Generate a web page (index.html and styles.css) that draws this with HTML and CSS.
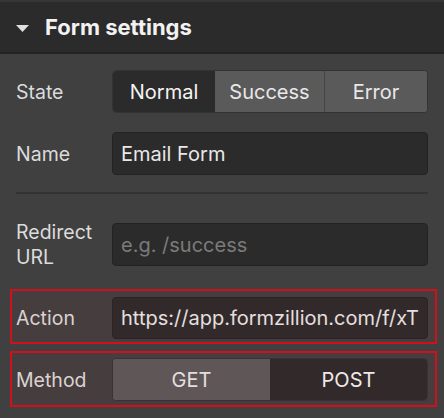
FILE: index.html
```html
<!DOCTYPE html>
<html>
<head>
<meta charset="utf-8">
<link rel="stylesheet" href="styles.css">
</head>
<body>
<div class="panel">
  <div class="header">
    <svg class="caret" width="13" height="7" viewBox="0 0 13 7"><path d="M0 0H13L6.5 7Z" fill="#e0e0e0"/></svg>
    <span class="title">Form settings</span>
  </div>
  <div class="content">
    <div class="row row-state">
      <div class="label">State</div>
      <div class="seg">
        <div class="seg-item seg-active seg-normal">Normal</div>
        <div class="seg-item seg-success">Success</div>
        <div class="seg-item seg-error">Error</div>
      </div>
    </div>
    <div class="row row-name">
      <div class="label">Name</div>
      <div class="input">Email Form</div>
    </div>
    <div class="divider"></div>
    <div class="row row-redirect">
      <div class="label label-two">Redirect<br>URL</div>
      <div class="input placeholder">e.g. /success</div>
    </div>
    <div class="row row-action highlight">
      <div class="label">Action</div>
      <div class="input clip"><span class="url">https://app.formzillion.com/f/xT</span></div>
    </div>
    <div class="row row-method highlight">
      <div class="label">Method</div>
      <div class="seg">
        <div class="seg-item seg-get">GET</div>
        <div class="seg-item seg-active seg-post">POST</div>
      </div>
    </div>
  </div>
</div>
</body>
</html>
```

FILE: styles.css
```css
* { box-sizing: border-box; }
html, body { margin: 0; padding: 0; }
body {
  background: #404040;
  font-family: Inter, "Noto Sans", sans-serif;
  color: #e2e2e2;
  width: 444px;
  height: 418px;
  overflow: hidden;
}
.panel { width: 444px; }
.header {
  height: 54px;
  background: #2b2b2b;
  border-top: 2px solid #363636;
  border-bottom: 2px solid #232323;
  display: flex;
  align-items: center;
  padding-left: 16px;
}
.caret { margin-right: 16px; margin-top: 2px; }
.title {
  font-size: 22px;
  font-weight: 700;
  color: #f2f2f2;
}
.content {
  padding: 16px 16px 0 16px;
  display: flex;
  flex-direction: column;
}
.row {
  display: flex;
  align-items: center;
  height: 43px;
  flex: none;
}
.row-name { margin-top: 19px; }
.row-redirect { margin-top: 29px; }
.row-action { margin-top: 31px; height: 42px; }
.row-method { margin-top: 19px; }
.label {
  width: 96px;
  flex: none;
  font-size: 19.5px;
  color: #dcdcdc;
}
.label-two { line-height: 25px; }
.seg {
  flex: 1;
  display: flex;
  height: 43px;
  border: 1px solid #333;
  border-radius: 4px;
  overflow: hidden;
  background: #5a5a5a;
}
.seg-item {
  display: flex;
  align-items: center;
  justify-content: center;
  font-size: 20px;
  color: #e8e8e8;
  background: #5a5a5a;
}
.seg-active { background: #2b2b2b; color: #f4f4f4; }
.seg-normal { width: 102px; }
.seg-success { width: 110px; border-right: 1px solid #444; }
.seg-error { flex: 1; }
.seg-get { width: 157px; }
.seg-post { flex: 1; }
.input {
  flex: 1;
  min-width: 0;
  height: 43px;
  background: #2b2b2b;
  border: 1px solid #232323;
  border-radius: 4px;
  display: flex;
  align-items: center;
  padding-left: 8px;
  font-size: 20px;
  color: #e8e8e8;
  white-space: nowrap;
  overflow: hidden;
}
.row-action .input { height: 42px; }
.placeholder { color: #7b7b7b; }
.divider {
  height: 2px;
  background: #333;
  margin-top: 17px;
  flex: none;
}
.highlight { position: relative; }
.highlight::after {
  content: "";
  position: absolute;
  left: -6px;
  right: -9px;
  top: -8px;
  bottom: -5px;
  border: 2px solid #d0101c;
  background: rgba(200, 40, 40, 0.05);
  pointer-events: none;
}
.row-method.highlight::after { top: -7px; bottom: -6px; }
```
